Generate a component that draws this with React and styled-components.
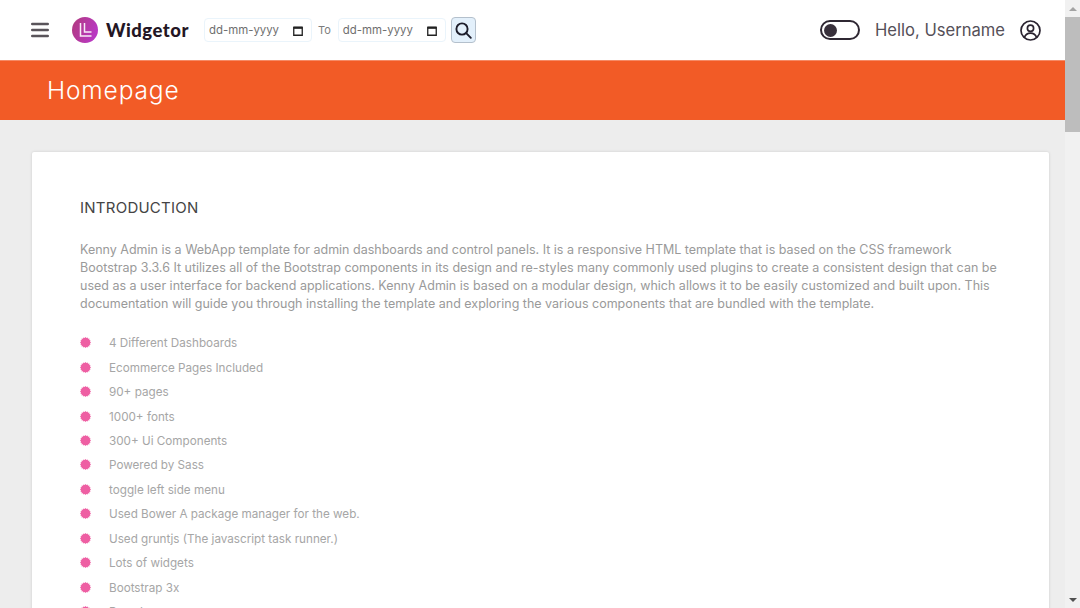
import React from 'react';
import styled, { createGlobalStyle } from 'styled-components';

const features = [
  '4 Different Dashboards',
  'Ecommerce Pages Included',
  '90+ pages',
  '1000+ fonts',
  '300+ Ui Components',
  'Powered by Sass',
  'toggle left side menu',
  'Used Bower A package manager for the web.',
  'Used gruntjs (The javascript task runner.)',
  'Lots of widgets',
  'Bootstrap 3x',
  'Dropdown',
];

const Global = createGlobalStyle`
  html, body { margin: 0; height: 100%; overflow: hidden; background: #ededed; }
  * { box-sizing: border-box; }
  body { font-family: Inter, "Open Sans", sans-serif; }
`;

const Shell = styled.div`
  display: flex;
  width: 1080px;
  height: 608px;
  overflow: hidden;
`;

const Page = styled.div`
  width: 1065px;
  height: 608px;
  overflow: hidden;
`;

const Header = styled.header`
  display: flex;
  align-items: center;
  height: 60px;
  padding: 0 24px 0 31px;
  background: #fff;
`;

const Burger = styled.button`
  display: flex;
  padding: 0;
  border: 0;
  background: none;
  color: #59545a;
  margin-right: 23px;
`;

const Brand = styled.div`
  display: flex;
  align-items: center;
  gap: 8px;
  width: 132px;
`;

const BrandName = styled.span`
  font-family: Lato, sans-serif;
  font-weight: 900;
  font-size: 18.5px;
  letter-spacing: 0.5px;
  color: #241624;
`;

const DateBox = styled.div`
  display: flex;
  align-items: center;
  justify-content: space-between;
  width: 108px;
  height: 24px;
  padding: 0 8px 0 4px;
  border: 1px solid #eaf4fb;
  border-radius: 4px;
  font-size: 11.4px;
  color: #6f6f6f;
`;

const ToLabel = styled.span`
  margin: 0 7px 0 6px;
  font-size: 11px;
  color: #7d7d7d;
`;

const SearchButton = styled.button`
  display: flex;
  align-items: center;
  justify-content: center;
  width: 25px;
  height: 26px;
  margin-left: 5px;
  padding: 0;
  border: 1px solid #b4c0cc;
  border-radius: 4px;
  background: #e3f0fb;
  color: #1d1d2b;
`;

const HeaderRight = styled.div`
  display: flex;
  align-items: center;
  margin-left: auto;
`;

const Toggle = styled.div`
  display: flex;
  align-items: center;
  width: 40px;
  height: 20px;
  padding: 0 2px;
  margin-right: 15px;
  border: 2px solid #2f2833;
  border-radius: 10px;
`;

const ToggleKnob = styled.div`
  width: 13px;
  height: 13px;
  border-radius: 50%;
  background: #38303b;
`;

const Greeting = styled.span`
  margin-right: 15px;
  font-size: 16.6px;
  color: #555058;
`;

const Banner = styled.div`
  display: flex;
  align-items: center;
  height: 60px;
  padding: 0 0 2px 47px;
  background: #f25b26;
  border-top: 1px solid #f58a66;
`;

const BannerTitle = styled.h1`
  margin: 0;
  font-size: 24.5px;
  font-weight: 300;
  letter-spacing: 0.85px;
  color: #fff;
`;

const Content = styled.main`
  padding: 32px 16px 0 32px;
`;

const Card = styled.section`
  padding: 47px 48px 0;
  height: 600px;
  background: #fff;
  border-radius: 2px;
  box-shadow: 0 0 3px rgba(0, 0, 0, 0.14);
`;

const CardTitle = styled.h2`
  margin: 0 0 24px;
  font-size: 15px;
  line-height: 18px;
  font-weight: 400;
  letter-spacing: 0.25px;
  color: #444;
`;

const Intro = styled.p`
  margin: 0 0 18px;
  width: 925px;
  font-size: 12.5px;
  line-height: 18px;
  color: #9a9a9a;
`;

const Features = styled.ul`
  margin: 0;
  padding: 0;
  list-style: none;
`;

const Feature = styled.li`
  display: flex;
  align-items: center;
  gap: 18px;
  height: 24.45px;
  font-size: 11.7px;
  color: #a6a6a6;
`;

const Bullet = styled.svg`
  flex: none;
  width: 11px;
  height: 11px;
  margin-top: -1px;
  color: #ee5fa3;
`;

const Scrollbar = styled.aside`
  display: flex;
  flex-direction: column;
  width: 15px;
  height: 608px;
  background: #f1f1f1;
`;

const ScrollArrow = styled.div`
  display: flex;
  align-items: center;
  justify-content: center;
  height: 17px;
`;

const ScrollThumb = styled.div`
  height: 115px;
  background: #bdbdbd;
`;

const ScrollTrack = styled.div`
  flex: 1;
`;

const Triangle = styled.div`
  width: 0;
  height: 0;
  border-left: 4px solid transparent;
  border-right: 4px solid transparent;
  ${(p) => (p.$down ? 'border-top: 4px solid #505050;' : 'border-bottom: 4px solid #a3a3a3;')}
`;

function CalendarIcon() {
  return (
    <svg width="10" height="11" viewBox="0 0 10 11" fill="none">
      <path d="M0.75 2.5h8.5v7.75h-8.5z" stroke="#222" strokeWidth="1.3" />
      <path d="M0.5 1.6h9v2.2h-9z" fill="#222" />
    </svg>
  );
}

function LogoMark() {
  return (
    <svg width="26" height="26" viewBox="0 0 26 26">
      <defs>
        <linearGradient id="logoFill" x1="0" y1="0" x2="1" y2="0.4">
          <stop offset="0" stopColor="#b13a7c" />
          <stop offset="1" stopColor="#b938c2" />
        </linearGradient>
      </defs>
      <circle cx="13" cy="13" r="13" fill="url(#logoFill)" />
      <path d="M8.5 6v13h11" fill="none" stroke="#fff" strokeOpacity="0.9" strokeWidth="1.5" />
      <path d="M12.5 6v9h7" fill="none" stroke="#fff" strokeOpacity="0.9" strokeWidth="1.5" />
    </svg>
  );
}

// spiky round bullet, 16 points
const burstPoints = Array.from({ length: 32 }, (_, i) => {
  const r = i % 2 ? 5 : 6;
  const a = (i * Math.PI) / 16;
  return `${(6 + r * Math.cos(a)).toFixed(2)},${(6 + r * Math.sin(a)).toFixed(2)}`;
}).join(' ');

function DateField() {
  return (
    <DateBox>
      <span>dd-mm-yyyy</span>
      <CalendarIcon />
    </DateBox>
  );
}

export default function App() {
  return (
    <Shell>
      <Global />
      <Page>
        <Header>
          <Burger aria-label="menu">
            <svg width="18" height="16" viewBox="0 0 18 16" fill="none" stroke="currentColor" strokeWidth="2.4" strokeLinecap="round">
              <path d="M1.2 2h15.6M1.2 8h15.6M1.2 14h15.6" />
            </svg>
          </Burger>
          <Brand>
            <LogoMark />
            <BrandName>Widgetor</BrandName>
          </Brand>
          <DateField />
          <ToLabel>To</ToLabel>
          <DateField />
          <SearchButton aria-label="search">
            <svg width="17" height="17" viewBox="0 0 17 17" fill="none" stroke="currentColor" strokeWidth="1.9" strokeLinecap="round">
              <circle cx="7" cy="7" r="5.6" />
              <path d="M11.2 11.2l4.6 4.6" />
            </svg>
          </SearchButton>
          <HeaderRight>
            <Toggle><ToggleKnob /></Toggle>
            <Greeting>Hello, Username</Greeting>
            <svg width="21" height="21" viewBox="0 0 21 21" fill="none" stroke="#2a2330" strokeWidth="1.7">
              <circle cx="10.5" cy="10.5" r="9.5" />
              <circle cx="10.5" cy="8.2" r="3.1" />
              <path d="M4.5 17.3c1-3 3.2-4.2 6-4.2s5 1.2 6 4.2" />
            </svg>
          </HeaderRight>
        </Header>
        <Banner>
          <BannerTitle>Homepage</BannerTitle>
        </Banner>
        <Content>
          <Card>
            <CardTitle>INTRODUCTION</CardTitle>
            <Intro>
              Kenny Admin is a WebApp template for admin dashboards and control panels. It is a responsive HTML template that is based on the CSS framework Bootstrap 3.3.6 It utilizes all of the Bootstrap components in its design and re-styles many commonly used plugins to create a consistent design that can be used as a user interface for backend applications. Kenny Admin is based on a modular design, which allows it to be easily customized and built upon. This documentation will guide you through installing the template and exploring the various components that are bundled with the template.
            </Intro>
            <Features>
              {features.map((f) => (
                <Feature key={f}>
                  <Bullet viewBox="0 0 12 12">
                    <polygon points={burstPoints} fill="currentColor" />
                  </Bullet>
                  {f}
                </Feature>
              ))}
            </Features>
          </Card>
        </Content>
      </Page>
      <Scrollbar>
        <ScrollArrow><Triangle /></ScrollArrow>
        <ScrollThumb />
        <ScrollTrack />
        <ScrollArrow><Triangle $down /></ScrollArrow>
      </Scrollbar>
    </Shell>
  );
}
